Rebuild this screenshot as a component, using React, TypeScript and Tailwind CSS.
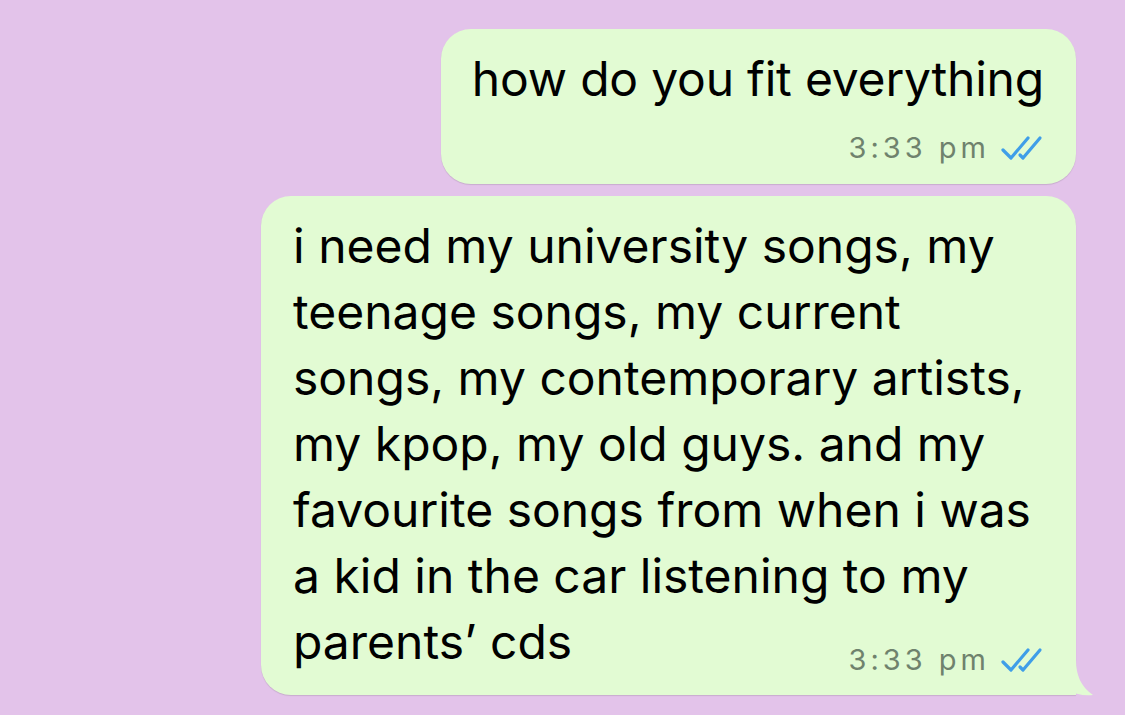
import React from "react";

const font = { fontFamily: "Inter, 'Liberation Sans', sans-serif" };

const Ticks = () => (
  <svg width="44" height="26" viewBox="0 0 44 26" className="ml-[10px] shrink-0">
    <path
      d="M3 15 L11 23 L28 3"
      fill="none"
      stroke="#3f9ee8"
      strokeWidth="3.2"
      strokeLinecap="round"
      strokeLinejoin="round"
    />
    <path
      d="M20 20 L23 23 L40 3"
      fill="none"
      stroke="#3f9ee8"
      strokeWidth="3.2"
      strokeLinecap="round"
      strokeLinejoin="round"
    />
  </svg>
);

const Stamp = () => (
  <div className="flex items-center h-[34px] leading-[34px] text-[29px] tracking-[4px] text-[#6f826d] whitespace-nowrap">
    <span>3:33 pm</span>
    <Ticks />
  </div>
);

const lines = [
  "i need my university songs, my",
  "teenage songs, my current",
  "songs, my contemporary artists,",
  "my kpop, my old guys. and my",
  "favourite songs from when i was",
  "a kid in the car listening to my",
  "parents\u2019 cds",
];

export default function App() {
  return (
    <div
      className="w-[1125px] h-[715px] bg-[#e3c3ea] flex flex-col items-end pt-[29px] pr-[49px] gap-[12px] overflow-hidden"
      style={font}
    >
      {/* first bubble */}
      <div className="w-[635px] h-[155px] bg-[#e2fbd3] rounded-[30px] shadow-[0_1px_1px_rgba(0,0,0,0.12)] pt-[17px] px-[32px] flex flex-col items-end">
        <div className="text-[48px] leading-[66px] tracking-[-0.2px] text-black whitespace-nowrap">
          how do you fit everything
        </div>
        <div className="mt-[19px]">
          <Stamp />
        </div>
      </div>

      {/* second bubble with tail */}
      <div className="relative w-[815px] h-[499px] bg-[#e2fbd3] rounded-[30px] rounded-br-none shadow-[0_1px_1px_rgba(0,0,0,0.12)] pt-[17px] pl-[32px] pr-[32px]">
        <div className="text-[48px] leading-[66px] text-black whitespace-nowrap">
          {lines.map((l) => (
            <div key={l}>{l}</div>
          ))}
        </div>
        <div className="flex justify-end mt-[-32px]">
          <Stamp />
        </div>
        <svg
          width="40"
          height="62"
          viewBox="0 0 40 62"
          className="absolute right-[-20px] bottom-[-2px]"
        >
          <path
            d="M0 0 L20 0 L20 25 C20 40 25 52 37 60 C28 61 18 59 10 55 C6 57 3 60 0 60 Z"
            fill="#e2fbd3"
          />
        </svg>
      </div>
    </div>
  );
}
